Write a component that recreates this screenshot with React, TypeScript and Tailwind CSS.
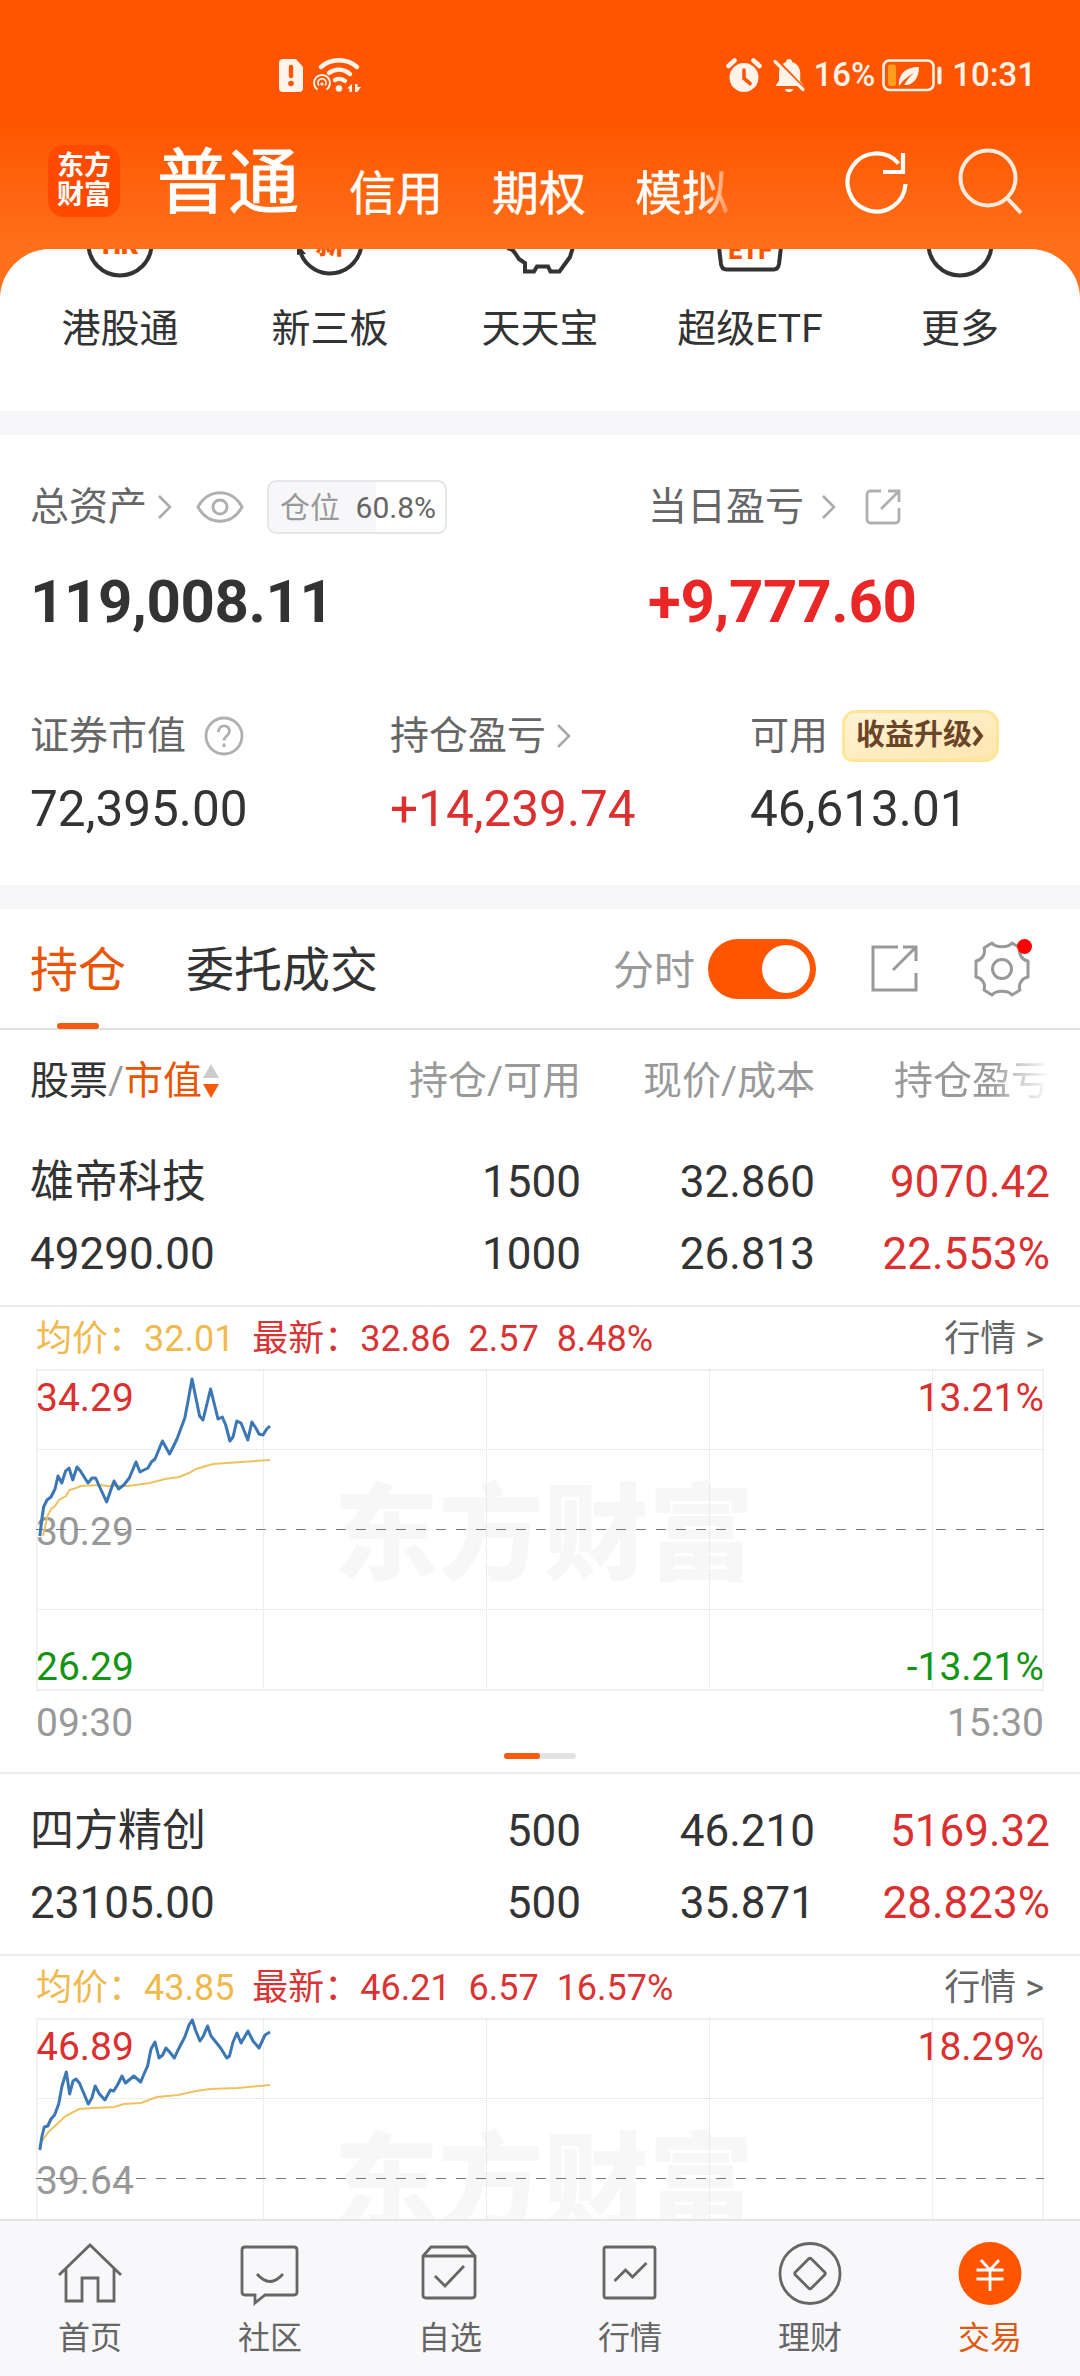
import type { ReactNode } from "react";

type Stock = {
  name: string;
  value: string;
  held: string;
  usable: string;
  price: string;
  cost: string;
  profit: string;
  profitRate: string;
  avg: string;
  last: string;
  change: string;
  changeRate: string;
  high: string;
  mid: string;
  low: string;
  range: string;
  line: string;
  avgLine: string;
};

const stocks: Stock[] = [
  {
    name: "雄帝科技",
    value: "49290.00",
    held: "1500",
    usable: "1000",
    price: "32.860",
    cost: "26.813",
    profit: "9070.42",
    profitRate: "22.553%",
    avg: "32.01",
    last: "32.86",
    change: "2.57",
    changeRate: "8.48%",
    high: "34.29",
    mid: "30.29",
    low: "26.29",
    range: "13.21%",
    line: "3.8,167 5.9,150 7.6,138 11,131 15,128 19,120 22,107 25.8,114 29.6,102 33,99 36.8,111 41,98 44.4,102 52,114 56,109 59.6,109 70.6,133 78,112 82.6,120 87.8,116 93.3,109 100,93 104,103 107.8,101 112,99 115.4,93 119,90 126.4,72 133.6,85 141,70 148.8,49 151.5,35 156,10 163.6,47 167,51 174.6,20 182,50 186.3,48 189.7,56 193.9,72 197,68 200.8,52 205,54 211.8,71 215.9,53 220.4,60 223,65 227,66 230.7,60 234,57",
    avgLine:
      "7,167 11.4,147 15,140 19,137 23,131 30,127 33.4,121 40,119 44.8,117 63.7,116 72,117 92,117 114,114 129,110 143,108 153,104 160,100 177,95 191,94 234,91",
  },
  {
    name: "四方精创",
    value: "23105.00",
    held: "500",
    usable: "500",
    price: "46.210",
    cost: "35.871",
    profit: "5169.32",
    profitRate: "28.823%",
    avg: "43.85",
    last: "46.21",
    change: "6.57",
    changeRate: "16.57%",
    high: "46.89",
    mid: "39.64",
    low: "32.39",
    range: "18.29%",
    line: "3.8,132 6,118 8.3,109 11.7,108 15,101 18.6,97 22.7,86 26,68 30.3,54 33.7,76 37,63 40,61 43.4,65 52.3,86 55.8,80 59.2,68 63.4,76 68.9,82 74.4,72 77.8,73 82,66 86,58 89.5,65 97.8,58 104.7,64 108,56 111.6,48 115,31 119,24 123,40 126.7,37 130,30 133.6,34 138.4,40 142,32 148.8,19 153,7 156.3,2 159.8,13 164,23 167.4,18 171.5,8 175,18 184.6,30 190.8,40 193.5,38 197,24 201,15 205,25 212,13 217,23 223,30 229,17 234,14",
    avgLine:
      "6,123 12.4,114 19,108 29.6,98 43,91 57,90 78,89 88,86 105,85 121,79 142,77 160,73 174,71 202,70 234,67",
  },
];

function Chevron({ className }: { className?: string }) {
  return (
    <svg className={className} width="16" height="28" viewBox="0 0 16 28" fill="none" stroke="#aaa" strokeWidth="2.6">
      <path d="M2 3l11 11L2 25" />
    </svg>
  );
}

function StatusBar() {
  return (
    <div className="flex h-[102px] items-end pb-[9px] pl-[278px] pr-[44px] text-[33px] font-medium leading-[36px] text-[#fff3ea]">
      <svg width="26" height="36" viewBox="0 0 26 36">
        <path d="M5 2h13l7 8v21a4 4 0 0 1-4 4H5a4 4 0 0 1-4-4V6a4 4 0 0 1 4-4z" fill="currentColor" />
        <path d="M13 10v9" stroke="#ff5500" strokeWidth="4.4" strokeLinecap="round" />
        <circle cx="13" cy="26.5" r="2.8" fill="#ff5500" />
      </svg>
      <svg width="50" height="36" viewBox="0 0 50 36" fill="none" stroke="currentColor" className="ml-2">
        <path d="M9 10c10-9 26-9 36 0" strokeWidth="4.4" strokeLinecap="round" />
        <path d="M17 16c7-5 15-4 21 1" strokeWidth="4.4" strokeLinecap="round" />
        <path d="M23 23c4-2 7-1 10 1" strokeWidth="4.2" strokeLinecap="round" />
        <circle cx="27" cy="31.5" r="3.3" fill="currentColor" stroke="none" />
        <path d="M5.5 32.5a8 8 0 1 1 9 0" strokeWidth="2" />
        <path d="M7 28.5a4 4 0 1 1 6 0" strokeWidth="1.8" />
        <circle cx="10" cy="27" r="1.6" fill="currentColor" stroke="none" />
        <path d="M40 27v8h-2.5v-3.500H35zM43 27v8h2.200L49 30h-3.500v-3z" fill="currentColor" stroke="none" />
      </svg>
      <div className="ml-auto flex items-end">
        <svg width="36" height="36" viewBox="0 0 36 36" fill="currentColor">
          <circle cx="18" cy="20.5" r="14.5" />
          <path d="M2.5 9l6-5.500M33.500 9l-6-5.500" stroke="currentColor" strokeWidth="4.5" strokeLinecap="round" />
          <path d="M18 13v8.500l6 5" fill="none" stroke="#ff5500" strokeWidth="3.6" strokeLinecap="round" />
        </svg>
        <svg width="34" height="36" viewBox="0 0 34 36" fill="currentColor" className="ml-[10px]">
          <path d="M17 2c2 0 3.200 1.400 3.200 3 5 1.500 8 6 8 11v8l3 4v1H4v-1l3-4v-8c0-5 2.500-9.500 7-11 0-1.600 1-3 3-3z" />
          <path d="M13 32h8a4 3 0 0 1-8 0z" />
          <path d="M2.500 1.500l31 32" stroke="#ff5500" strokeWidth="4" />
          <path d="M3 4.500l28 28" stroke="currentColor" strokeWidth="3.2" strokeLinecap="round" />
        </svg>
        <span className="ml-[7px]">16%</span>
        <svg width="62" height="36" viewBox="0 0 62 36" fill="none" className="ml-[7px]">
          <rect x="1.5" y="3.5" width="50" height="29.5" rx="6" stroke="currentColor" strokeWidth="2.6" />
          <rect x="6" y="7.5" width="8" height="21.5" rx="2" fill="#ff9d1c" />
          <path d="M17 29c-1-12 7-19 20-19 0 11-6 19-15 18 3-5 6-9 10-12-6 3-11 7-15 13z" fill="currentColor" />
          <path d="M57.500 11.500v14" stroke="currentColor" strokeWidth="4" strokeLinecap="round" />
        </svg>
        <span className="ml-[8px]">10:31</span>
      </div>
    </div>
  );
}

function Header() {
  return (
    <div className="flex h-[147px] items-start pl-12 text-white">
      <div className="mt-[43px] flex h-[72px] w-[72px] flex-col items-center justify-center rounded-[16px] bg-[#ff4a00] text-[27px] font-bold leading-[29px]">
        <span>东方</span>
        <span>财富</span>
      </div>
      <div className="ml-[37px] mt-[39px] whitespace-nowrap text-[71px] leading-[84px] [-webkit-text-stroke:1px_#fff]">普通</div>
      <div className="mt-[62px] flex w-[437px] gap-[49px] whitespace-nowrap pl-[50px] text-[47px] leading-[60px] [-webkit-text-stroke:0.4px_#fff]">
        <span>信用</span>
        <span>期权</span>
        <span className="[mask-image:linear-gradient(to_right,#000_65px,transparent_105px)]">模拟</span>
      </div>
      <svg className="ml-[107px] mt-[46px] shrink-0" width="66" height="70" viewBox="0 0 66 70" fill="none" stroke="#fff" strokeWidth="4.2">
        <path d="M59 35a29 29 0 1 1-7-20.500" transform="translate(3.5 1)" />
        <path d="M60 5v19H40" />
      </svg>
      <svg className="ml-[49px] mt-[46px] shrink-0" width="66" height="70" viewBox="0 0 66 70" fill="none" stroke="#ffeadd" strokeWidth="4">
        <circle cx="30" cy="30" r="27.5" />
        <path d="M49 50l14 15" />
      </svg>
    </div>
  );
}

const shortcuts: { label: string; icon: ReactNode }[] = [
  {
    label: "港股通",
    icon: (
      <>
        <circle cx="35" cy="-5" r="31.5" />
        <text x="35" y="5" fill="#ff5500" stroke="none" fontSize="27" fontWeight="900" textAnchor="middle">HK</text>
      </>
    ),
  },
  {
    label: "新三板",
    icon: (
      <>
        <path d="M6 5a31.500 31.500 0 0 0 60.500-10" />
        <path d="M2 6V-1h4l5 6z" fill="#333" stroke="none" />
        <text x="35" y="5" fill="#ff5500" stroke="none" fontSize="29" fontWeight="900" textAnchor="middle">新</text>
      </>
    ),
  },
  {
    label: "天天宝",
    icon: <path d="M2-1q6 1 8 5l4 6 6 4v8.500h9l3-5h11l2.500 5h9L65 8l3-10" />,
  },
  {
    label: "超级ETF",
    icon: (
      <>
        <path d="M3.500-6L6 15q.8 5.500 5.500 5.500h47q4.700 0 5.500-5.500l2.500-21" />
        <text x="35" y="10" fill="#ff5500" stroke="none" fontSize="25" fontWeight="900" textAnchor="middle">ETF</text>
      </>
    ),
  },
  { label: "更多", icon: <circle cx="35" cy="-5" r="31.5" /> },
];

function Shortcuts() {
  return (
    <div className="grid h-[162px] grid-cols-5 overflow-hidden rounded-t-[50px] bg-white px-[15px]">
      {shortcuts.map((s) => (
        <div key={s.label} className="flex flex-col items-center">
          <svg width="70" height="30" viewBox="0 0 70 30" fill="none" stroke="#333" strokeWidth="4">
            {s.icon}
          </svg>
          <span className="mt-[26px] text-[39px] leading-[48px] text-[#333]">{s.label}</span>
        </div>
      ))}
    </div>
  );
}

function Assets() {
  return (
    <div className="h-[450px] bg-white px-[30px] text-[39px] text-[#666]">
      <div className="flex pt-[45px]">
        <div className="w-[618px]">
          <div className="flex h-[54px] items-center">
            <span>总资产</span>
            <Chevron className="ml-[10px]" />
            <svg width="48" height="34" viewBox="0 0 48 34" fill="none" stroke="#b0b0b0" strokeWidth="3" className="ml-[23px]">
              <path d="M2 17C12-2 36-2 46 17 36 36 12 36 2 17z" />
              <circle cx="24" cy="17" r="7" />
            </svg>
            <div className="ml-[23px] flex h-[54px] w-[180px] items-center justify-between rounded-[9px] border-2 border-[#e6e6e8] bg-[linear-gradient(to_right,#f7f7fa_60.8%,#fff_60.8%)] pl-[11px] pr-[9px] text-[30px]">
              <span className="text-[#999]">仓位</span>
              <span>60.8%</span>
            </div>
          </div>
          <div className="mt-[33px] text-[60px] font-bold leading-[70px] tracking-[-0.4px] text-[#333]">119,008.11</div>
        </div>
        <div>
          <div className="flex h-[54px] items-center">
            <span>当日盈亏</span>
            <Chevron className="ml-[17px]" />
            <svg width="36" height="36" viewBox="0 0 36 36" fill="none" stroke="#b0b0b0" strokeWidth="2.8" className="ml-[28px]">
              <path d="M16 2H6Q2 2 2 6v24q0 4 4 4h24q4 0 4-4V19M23 2h11v11M34 2L16 20" />
            </svg>
          </div>
          <div className="mt-[33px] text-[60px] font-bold leading-[70px] tracking-[-0.3px] text-[#ea2626]">+9,777.60</div>
        </div>
      </div>
      <div className="mt-[69px] grid grid-cols-[360px_360px_300px]">
        <div>
          <div className="flex h-[60px] items-center">
            <span>证券市值</span>
            <svg width="40" height="40" viewBox="0 0 40 40" fill="none" stroke="#b0b0b0" strokeWidth="2.8" className="ml-[18px]">
              <circle cx="20" cy="20" r="18" />
              <path d="M14.500 16c0-8 11-8 11-1 0 5-5.500 5-5.500 9.500M20 27.500v3.500" />
            </svg>
          </div>
          <div className="mt-[12px] text-[49.5px] leading-[62px] text-[#333]">72,395.00</div>
        </div>
        <div>
          <div className="flex h-[60px] items-center">
            <span>持仓盈亏</span>
            <Chevron className="ml-[10px]" />
          </div>
          <div className="mt-[12px] text-[49.5px] leading-[62px] text-[#dc2f2f]">+14,239.74</div>
        </div>
        <div>
          <div className="flex h-[60px] items-center">
            <span>可用</span>
            <div className="ml-[14px] flex h-[52px] w-[157px] items-center rounded-[14px] rounded-bl-[10px] border-[3px] border-[#fde795] bg-gradient-to-br from-[#fff3d6] to-[#ffe6ae] pl-[11px] text-[29px] font-bold text-[#6a4528]">
              <span>收益升级</span>
              <svg width="13" height="22" viewBox="0 0 13 22" fill="none" stroke="#6a4528" strokeWidth="4">
                <path d="M2 2l7 9-7 9" />
              </svg>
            </div>
          </div>
          <div className="mt-[12px] text-[49.5px] leading-[62px] text-[#333]">46,613.01</div>
        </div>
      </div>
    </div>
  );
}

function Tabs() {
  return (
    <div className="flex h-[121px] items-start border-b-2 border-[#e0e0e0] bg-white pl-[30px] text-[48px] leading-[60px]">
      <div className="flex h-[120px] flex-col items-center pt-[32px] text-[#ea5504]">
        <span>持仓</span>
        <span className="mt-[22px] h-[6px] w-[42px] shrink-0 rounded-full bg-[#f55a0c]" />
      </div>
      <span className="ml-[60px] mt-[32px] text-[#333]">委托成交</span>
      <span className="ml-[235px] mt-[32px] text-[41px] text-[#999]">分时</span>
      <div className="ml-[13px] mt-[30px] flex h-[60px] w-[108px] items-center justify-end rounded-full bg-[#ff5500] pr-[6px]">
        <span className="h-12 w-12 rounded-full bg-white" />
      </div>
      <svg width="48" height="48" viewBox="0 0 48 48" fill="none" stroke="#999" strokeWidth="3" className="ml-[55px] mt-[36px]">
        <path d="M27 2H2v43h43V28M32 2h13v14M45 2L22 25" />
      </svg>
      <div className="relative ml-[54px] mt-[32px]">
        <svg width="58" height="56" viewBox="0 0 58 56" fill="none" stroke="#999" strokeWidth="3" strokeLinejoin="round">
          <path d="M19 2c4 5 16 5 20 0l8 5c-2 6 2 12 8 13v16c-6 1-10 7-8 13l-8 5c-4-5-16-5-20 0l-8-5c2-6-2-12-8-13V20c6-1 10-7 8-13z" />
          <circle cx="29" cy="28" r="9.5" />
        </svg>
        <span className="absolute -top-[2px] left-[44px] h-[15px] w-[15px] rounded-full bg-[#f00]" />
      </div>
    </div>
  );
}

const columns = "grid grid-cols-[260px_291px_234px_235px] px-[30px]";

function TableHead() {
  return (
    <div className={`${columns} h-[95px] items-start bg-white pt-[26px] text-[39px] leading-[50px] text-[#999]`}>
      <div className="flex h-[50px] items-center">
        <span className="text-[#333]">股票</span>
        <span>/</span>
        <span className="text-[#ea5504]">市值</span>
        <svg width="16" height="36" viewBox="0 0 16 36" className="ml-[1px]">
          <path d="M0 15L8 1l8 14z" fill="#ccc" />
          <path d="M0 21l8 14 8-14z" fill="#f55a0c" />
        </svg>
      </div>
      <span className="text-right">持仓/可用</span>
      <span className="text-right">现价/成本</span>
      <span className="overflow-hidden whitespace-nowrap pl-[79px] [mask-image:linear-gradient(to_right,#000_175px,transparent_235px)]">
        持仓盈亏
      </span>
    </div>
  );
}

function Chart({ stock }: { stock: Stock }) {
  return (
    <div className="relative mx-9 h-[322px] text-[39px] leading-[46px]">
      <div className="absolute inset-0 flex items-center justify-center pl-[7px] pt-[11px] text-[105px] font-black leading-none text-[#f7f7f7]">
        东方财富
      </div>
      <span className="absolute left-0 top-[6px] text-[#dc2f2f]">{stock.high}</span>
      <span className="absolute left-0 top-[140px] text-[#999]">{stock.mid}</span>
      <span className="absolute left-0 top-[275px] text-[#139413]">{stock.low}</span>
      <span className="absolute right-0 top-[6px] text-[#dc2f2f]">{stock.range}</span>
      <span className="absolute right-0 top-[275px] text-[#139413]">-{stock.range}</span>
      <svg className="absolute inset-0" width="1008" height="322" viewBox="0 0 1008 322" fill="none">
        <rect x="0.5" y="1" width="1007" height="320" stroke="#efefef" strokeWidth="2" />
        <g stroke="#dedede" strokeWidth="1" strokeDasharray="1 1">
          <path d="M0 80.500h1008M0 240.500h1008M227.500 0v320M450.500 0v320M673.500 0v320M896.500 0v320" />
        </g>
        <path d="M0 160.500h1008" stroke="#777" strokeWidth="1" strokeDasharray="10 10" />
        <polyline points={stock.avgLine} stroke="#efc25f" strokeWidth="2" />
        <polyline points={stock.line} stroke="#3b76b5" strokeWidth="3" strokeLinejoin="round" />
      </svg>
    </div>
  );
}

function StockBlock({ stock }: { stock: Stock }) {
  return (
    <div className="h-[649px] shrink-0 border-b-2 border-[#ededed] bg-white">
      <div className={`${columns} h-[182px] grid-rows-[72px_72px] border-b-2 border-[#ededed] pt-[21px] text-[44px] leading-[72px] text-[#333] [&>*:not(:nth-child(4n+1))]:text-right`}>
        <span>{stock.name}</span>
        <span>{stock.held}</span>
        <span>{stock.price}</span>
        <span className="text-[#dc2f2f]">{stock.profit}</span>
        <span>{stock.value}</span>
        <span>{stock.usable}</span>
        <span>{stock.cost}</span>
        <span className="text-[#dc2f2f]">{stock.profitRate}</span>
      </div>
      <div className="flex h-[62px] items-center whitespace-pre px-9 pt-[2px] text-[36px] leading-[48px]">
        <span className="text-[#f0b94d]">均价：{stock.avg}</span>
        <span className="text-[#d93333]">{`  最新：${stock.last}  ${stock.change}  ${stock.changeRate}`}</span>
        <span className="ml-auto text-[#666]">{"行情 >"}</span>
      </div>
      <Chart stock={stock} />
      <div className="mx-9 flex h-[62px] justify-between pt-[9px] text-[39px] leading-[46px] text-[#999]">
        <span>09:30</span>
        <span>15:30</span>
      </div>
      <div className="mx-auto flex h-[6px] w-[72px] rounded-full bg-[#e3e3e3]">
        <span className="w-9 rounded-full bg-[#f95a0c]" />
      </div>
    </div>
  );
}

const navItems: { label: string; icon: ReactNode; active?: boolean }[] = [
  { label: "首页", icon: <path d="M2 34L33 4l31 30M9 28v32h16V37h16v23h16V28" /> },
  {
    label: "社区",
    icon: <path d="M8 6h49q3 0 3 3v42q0 3-3 3H28l-10 8v-8H8q-3 0-3-3V9q0-3 3-3zM20 33q13 15 26 0" />,
  },
  {
    label: "自选",
    icon: <path d="M6 15v39q0 3 3 3h46q3 0 3-3V15l-8-9H14zM6 15h52M18 35l10 10 19-20" />,
  },
  {
    label: "行情",
    icon: <path d="M9 6h47q2 0 2 2v47q0 2-2 2H9q-2 0-2-2V8q0-2 2-2zM17.500 40l11-11 7 7 14-14" />,
  },
  {
    label: "理财",
    icon: (
      <>
        <circle cx="33" cy="32.5" r="30" />
        <path d="M31.500 18q1.500-1.500 3 0l13 13q1.500 1.500 0 3l-13 13q-1.500 1.500-3 0l-13-13q-1.500-1.500 0-3z" />
      </>
    ),
  },
  {
    label: "交易",
    active: true,
    icon: (
      <>
        <circle cx="33" cy="32.5" r="31.5" fill="#ff5500" stroke="none" />
        <path d="M24 19l9 10 9-10M33 29v21M19.500 29h27M19.500 38h27" stroke="#fff" />
      </>
    ),
  },
];

function BottomNav() {
  return (
    <nav className="grid h-[157px] shrink-0 grid-cols-6 border-t-2 border-[#e4e4e4] bg-[#f8f8fa]">
      {navItems.map((item) => (
        <div key={item.label} className={`flex flex-col items-center pt-5 ${item.active ? "text-[#dd5a14]" : "text-[#666]"}`}>
          <svg width="66" height="66" viewBox="0 0 66 66" fill="none" stroke="currentColor" strokeWidth="2.8">
            {item.icon}
          </svg>
          <span className="mt-[10px] text-[32px] leading-[42px]">{item.label}</span>
        </div>
      ))}
    </nav>
  );
}

export default function App() {
  return (
    <div className="flex h-[2376px] w-[1080px] flex-col overflow-hidden bg-[#f7f7fa] font-['Roboto','Noto_Sans_CJK_SC',sans-serif]">
      <main className="flex min-h-0 flex-1 flex-col overflow-hidden">
        <div className="h-[411px] shrink-0 bg-[linear-gradient(#ff5500_120px,#ff701a_250px)]">
          <StatusBar />
          <Header />
          <Shortcuts />
        </div>
        <div className="mt-6 shrink-0">
          <Assets />
        </div>
        <div className="mt-6 shrink-0">
          <Tabs />
          <TableHead />
        </div>
        {stocks.map((s) => (
          <StockBlock key={s.name} stock={s} />
        ))}
      </main>
      <BottomNav />
    </div>
  );
}
